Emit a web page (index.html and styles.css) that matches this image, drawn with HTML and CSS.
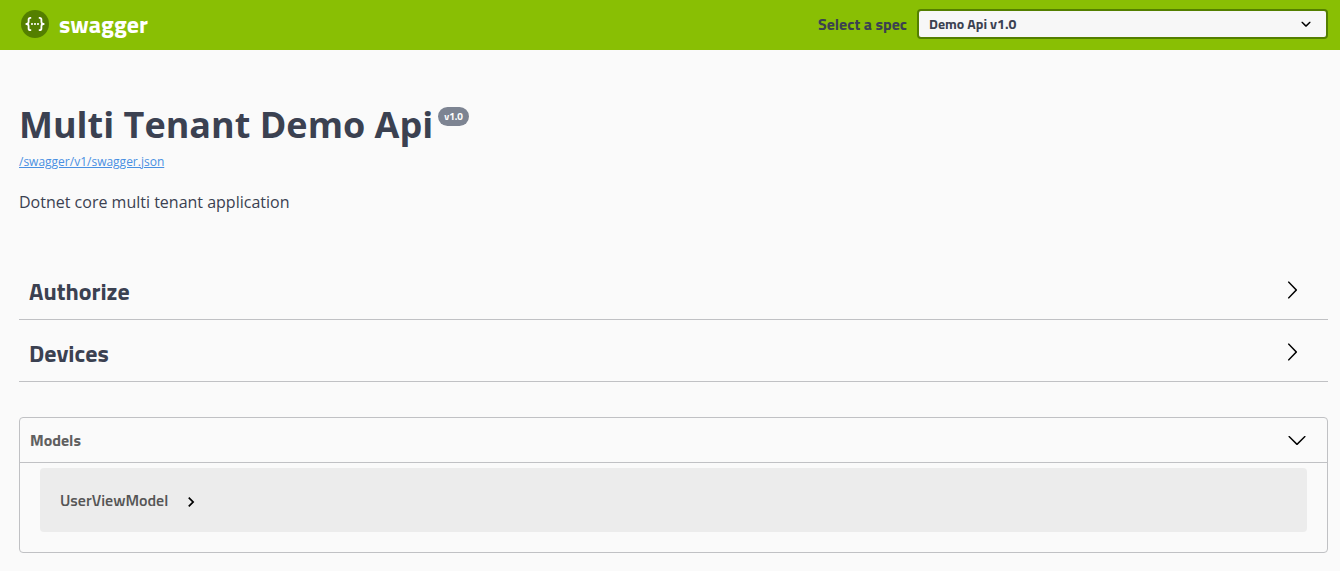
FILE: index.html
```html
<!DOCTYPE html>
<html lang="en">
<head>
<meta charset="utf-8">
<meta name="viewport" content="width=device-width, initial-scale=1">
<title>Swagger UI</title>
<link rel="stylesheet" href="styles.css">
</head>
<body>
<header class="topbar">
  <a class="brand" href="#">
    <svg class="brand-mark" viewBox="0 0 28 28" aria-hidden="true">
      <circle cx="14" cy="14" r="14" fill="#547f00"/>
      <g fill="none" stroke="#fff" stroke-width="1.8" stroke-linejoin="round">
        <path d="M10.2 7.8H9.4Q7.6 7.8 7.6 9.5V11.8Q7.6 14 5.3 14Q7.6 14 7.6 16.2V18.5Q7.6 20.2 9.4 20.2H10.2"/>
        <path d="M17.8 7.8H18.6Q20.4 7.8 20.4 9.5V11.8Q20.4 14 22.7 14Q20.4 14 20.4 16.2V18.5Q20.4 20.2 18.6 20.2H17.8"/>
      </g>
      <g fill="#fff"><circle cx="11" cy="14" r="1.05"/><circle cx="14" cy="14" r="1.05"/><circle cx="17" cy="14" r="1.05"/></g>
    </svg>
    <span>swagger</span>
  </a>
  <div class="spec">
    <label class="spec-label" for="spec">Select a spec</label>
    <div class="select-box">
      <select class="spec-select" id="spec"><option>Demo Api v1.0</option></select>
      <svg class="icon select-arrow" viewBox="0 0 20 20" aria-hidden="true"><path d="M13.418 7.859c.271-.268.709-.268.978 0 .27.268.272.701 0 .969l-3.908 3.83c-.27.268-.707.268-.979 0l-3.908-3.83c-.27-.267-.27-.701 0-.969.271-.268.709-.268.978 0L10 11l3.418-3.141z"/></svg>
    </div>
  </div>
</header>
<main class="page">
  <section class="info">
    <div class="title-row">
      <h1 class="title">Multi Tenant Demo Api</h1>
      <span class="version">v1.0</span>
    </div>
    <a class="spec-link" href="#">/swagger/v1/swagger.json</a>
    <p class="description">Dotnet core multi tenant application</p>
  </section>
  <section class="tags">
    <h2 class="tag"><button class="tag-button" type="button" aria-expanded="false">Authorize
      <svg class="icon tag-arrow" viewBox="0 0 20 20" aria-hidden="true"><path d="M13.25 10L6.109 2.58c-.268-.27-.268-.707 0-.979.268-.27.701-.27.969 0l7.83 7.908c.268.271.268.709 0 .979l-7.83 7.908c-.268.271-.701.27-.969 0-.268-.269-.268-.707 0-.979L13.25 10z"/></svg>
    </button></h2>
    <h2 class="tag"><button class="tag-button" type="button" aria-expanded="false">Devices
      <svg class="icon tag-arrow" viewBox="0 0 20 20" aria-hidden="true"><path d="M13.25 10L6.109 2.58c-.268-.27-.268-.707 0-.979.268-.27.701-.27.969 0l7.83 7.908c.268.271.268.709 0 .979l-7.83 7.908c-.268.271-.701.27-.969 0-.268-.269-.268-.707 0-.979L13.25 10z"/></svg>
    </button></h2>
  </section>
  <section class="models">
    <h3 class="models-head"><button class="models-button" type="button" aria-expanded="true">Models
      <svg class="icon" viewBox="0 0 20 20" aria-hidden="true"><path d="M17.418 6.109c.272-.268.709-.268.979 0s.271.701 0 .969l-7.908 7.83c-.27.268-.707.268-.979 0l-7.908-7.83c-.27-.268-.27-.701 0-.969.271-.268.709-.268.979 0L10 13.25l7.418-7.141z"/></svg>
    </button></h3>
    <div class="model">
      <button class="model-button" type="button" aria-expanded="false">UserViewModel
        <svg class="icon model-arrow" viewBox="0 0 24 24" aria-hidden="true"><path d="M10 6L8.59 7.41 13.17 12l-4.58 4.59L10 18l6-6z"/></svg>
      </button>
    </div>
  </section>
</main>
</body>
</html>
```
FILE: styles.css
```css
*, *::before, *::after { box-sizing: border-box; }

body {
  margin: 0;
  background: #fafafa;
  color: #3b4151;
  font-family: "Open Sans", sans-serif;
}

button, select { font-family: inherit; color: inherit; }

.topbar, .tags, .models, .version {
  font-family: "Titillium Web", Roboto, sans-serif;
}

.topbar {
  display: flex;
  align-items: center;
  justify-content: space-between;
  height: 50px;
  padding: 0 12px 2px 21px;
  background: #89bf04;
}

.brand {
  display: flex;
  align-items: center;
  gap: 10px;
  color: #fff;
  font-size: 24px;
  font-weight: 700;
  line-height: 28px;
  text-decoration: none;
}

.brand-mark { width: 28px; height: 28px; }

.spec { display: flex; align-items: center; gap: 10px; }

.spec-label { font-size: 16px; font-weight: 700; }

.select-box { position: relative; width: 31vw; max-width: 411px; }

.spec-select {
  display: block;
  width: 100%;
  height: 30px;
  padding: 0 40px 2px 10px;
  border: 2px solid #547f00;
  border-radius: 4px;
  background: #f7f7f7;
  font-size: 14px;
  font-weight: 700;
  appearance: none;
}

.icon { flex: none; width: 20px; height: 20px; fill: #000; }

.select-arrow {
  position: absolute;
  top: 5px;
  right: 12px;
  pointer-events: none;
}

.page { padding: 50px 12px 18px 19px; }

.title-row { display: flex; align-items: flex-start; gap: 5px; }

.title {
  margin: 0;
  font-size: 36px;
  font-weight: 700;
  line-height: 50px;
}

.version {
  margin-top: 7px;
  padding: 0 6px;
  border-radius: 10px;
  background: #7d8492;
  color: #fff;
  font-size: 10px;
  font-weight: 700;
  line-height: 19px;
}

.spec-link {
  display: block;
  width: fit-content;
  margin-top: 3px;
  color: #4990e2;
  font-size: 12px;
  line-height: 18px;
}

.description { margin: 19px 0 44px; font-size: 16px; line-height: 24px; }

.tag { margin: 0; border-bottom: 1px solid #c0c1c4; }

.tag-button, .models-button {
  display: flex;
  align-items: center;
  justify-content: space-between;
  width: 100%;
  border: 0;
  background: none;
  font-weight: 700;
  text-align: left;
}

.tag-button {
  height: 61px;
  padding: 8px 26px 4px 10px;
  font-size: 24px;
}

.tag-arrow { margin-bottom: 2px; }

.models {
  margin-top: 35px;
  padding-bottom: 20px;
  border: 1px solid #c0c1c4;
  border-radius: 4px;
}

.models-head { margin: 0; border-bottom: 1px solid #c0c1c4; }

.models-button {
  height: 44px;
  padding: 0 20px 0 10px;
  color: #606060;
  font-size: 16px;
}

.model {
  margin: 5px 20px 0;
  padding: 20px;
  border-radius: 4px;
  background: #ececec;
}

.model-button {
  display: flex;
  align-items: center;
  gap: 13px;
  height: 24px;
  padding: 0;
  border: 0;
  background: none;
  color: #555;
  font-size: 16px;
  font-weight: 600;
}

.model-arrow { margin-top: 3px; }
```
